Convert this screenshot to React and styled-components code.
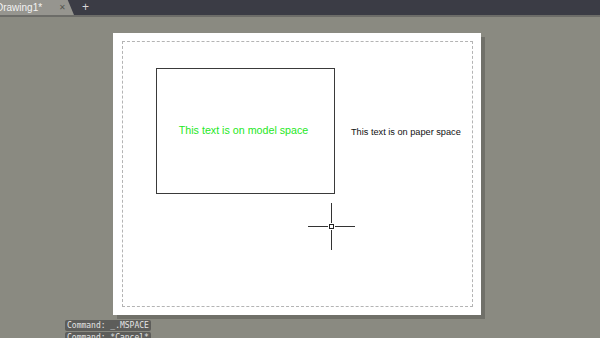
import React from "react";
import styled, { createGlobalStyle } from "styled-components";

const GlobalStyle = createGlobalStyle`
  html, body {
    margin: 0;
    padding: 0;
    background: #8a8a81;
    overflow: hidden;
  }
`;

const Window = styled.div`
  width: 600px;
  height: 338px;
  display: flex;
  flex-direction: column;
  font-family: "Liberation Sans", Arial, sans-serif;
  position: relative;
  overflow: hidden;
`;

const TabBar = styled.div`
  height: 15px;
  background: #3b3c45;
  border-bottom: 2px solid #6c6c68;
  display: flex;
  align-items: stretch;
  flex-shrink: 0;
`;

const Tab = styled.div`
  width: 70px;
  margin-left: -4px;
  background: #96958f;
  color: #f2f2f2;
  font-size: 10px;
  display: flex;
  align-items: center;
  justify-content: space-between;
  padding: 0 8px 0 0;
  clip-path: polygon(0 0, 92% 0, 100% 100%, 0 100%);
`;

const TabClose = styled.span`
  font-size: 8px;
  color: #55554f;
`;

const AddTab = styled.span`
  color: #d8d8d8;
  font-size: 12px;
  line-height: 15px;
  margin-left: 8px;
`;

const Canvas = styled.div`
  flex: 1;
  padding: 16px 0 0 113px;
`;

const Paper = styled.div`
  position: relative;
  width: 368px;
  height: 282px;
  background: #ffffff;
  box-shadow: 4px 4px 0 #707069;
`;

const Margin = styled.div`
  position: absolute;
  left: 9px;
  top: 8px;
  right: 8px;
  bottom: 8px;
  border: 1px dashed #b4b4b4;
`;

const Viewport = styled.div`
  position: absolute;
  left: 43px;
  top: 35px;
  width: 177px;
  height: 124px;
  border: 1px solid #3a3a3a;
  display: flex;
  align-items: center;
  justify-content: center;
  padding-right: 4px;
  box-sizing: border-box;
  width: 179px;
  height: 126px;
`;

const Label = styled.span`
  font-size: ${p => p.$size}px;
  color: ${p => p.$color};
  white-space: nowrap;
  line-height: 12px;
  margin-top: -2px;
`;

const PaperLabel = styled.div`
  position: absolute;
  left: 238px;
  top: 91px;
  line-height: 12px;
`;

const Cursor = styled.svg`
  position: absolute;
  left: 195px;
  top: 170px;
`;

const CommandLine = styled.div`
  position: absolute;
  left: 65px;
  top: 320px;
  display: flex;
  flex-direction: column;
  gap: 1px;
`;

const CommandRow = styled.div`
  background: #5d5d5a;
  color: #e4e4e4;
  font-family: "DejaVu Sans Mono", "Liberation Mono", monospace;
  font-size: 8px;
  line-height: 11px;
  padding: 0 2px;
  width: 82px;
  white-space: nowrap;
  border-radius: 2px;
`;

export default function App() {
  return (
    <Window>
      <GlobalStyle />
      <TabBar>
        <Tab>
          <span>Drawing1*</span>
          <TabClose>✕</TabClose>
        </Tab>
        <AddTab>+</AddTab>
      </TabBar>
      <Canvas>
        <Paper>
          <Margin />
          <Viewport>
            <Label $size={10.7} $color="#1ee81e">This text is on model space</Label>
          </Viewport>
          <PaperLabel>
            <Label $size={9.2} $color="#111">This text is on paper space</Label>
          </PaperLabel>
          <Cursor width="48" height="48" viewBox="0 0 48 48">
            <line x1="0" y1="23.5" x2="20" y2="23.5" stroke="#333" strokeWidth="1" />
            <line x1="27" y1="23.5" x2="47" y2="23.5" stroke="#333" strokeWidth="1" />
            <line x1="23.5" y1="0" x2="23.5" y2="20" stroke="#333" strokeWidth="1" />
            <line x1="23.5" y1="27" x2="23.5" y2="47" stroke="#333" strokeWidth="1" />
            <rect x="21.5" y="21.5" width="4" height="4" fill="#fff" stroke="#222" strokeWidth="1" />
          </Cursor>
        </Paper>
      </Canvas>
      <CommandLine>
        <CommandRow>Command: _.MSPACE</CommandRow>
        <CommandRow>Command: *Cancel*</CommandRow>
      </CommandLine>
    </Window>
  );
}
